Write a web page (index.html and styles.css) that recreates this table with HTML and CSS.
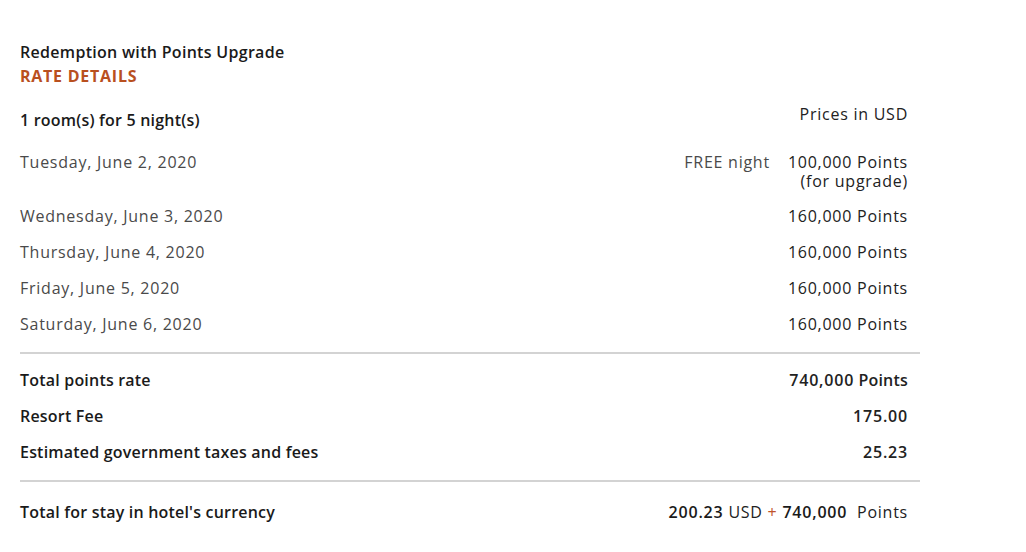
FILE: index.html
```html
<!DOCTYPE html>
<html lang="en">
<head>
<meta charset="utf-8">
<title>Rate details</title>
<link rel="stylesheet" href="styles.css">
</head>
<body>
<main class="rate">
  <header class="rate-head">
    <div class="rate-title">Redemption with Points Upgrade</div>
    <div class="rate-sub">RATE DETAILS</div>
  </header>
  <div class="row row-head">
    <div class="label strong head-label">1 room(s) for 5 night(s)</div>
    <div class="value">Prices in USD</div>
  </div>
  <div class="row">
    <div class="label">Tuesday, June 2, 2020</div>
    <div class="value value-free">
      <span class="free">FREE night</span>
      <span class="pts-block"><span class="line1">100,000 Points</span><span class="line2">(for upgrade)</span></span>
    </div>
  </div>
  <div class="row">
    <div class="label">Wednesday, June 3, 2020</div>
    <div class="value">160,000 Points</div>
  </div>
  <div class="row">
    <div class="label">Thursday, June 4, 2020</div>
    <div class="value">160,000 Points</div>
  </div>
  <div class="row">
    <div class="label">Friday, June 5, 2020</div>
    <div class="value">160,000 Points</div>
  </div>
  <div class="row">
    <div class="label">Saturday, June 6, 2020</div>
    <div class="value">160,000 Points</div>
  </div>
  <hr class="divider">
  <div class="row">
    <div class="label strong">Total points rate</div>
    <div class="value strong"><span class="num">740,000</span> Points</div>
  </div>
  <div class="row">
    <div class="label strong">Resort Fee</div>
    <div class="value strong num">175.00</div>
  </div>
  <div class="row">
    <div class="label strong">Estimated government taxes and fees</div>
    <div class="value strong num">25.23</div>
  </div>
  <hr class="divider divider-2">
  <div class="row">
    <div class="label strong">Total for stay in hotel's currency</div>
    <div class="value"><b class="strong num">200.23</b> USD <span class="plus">+</span> <b class="strong num">740,000</b>&nbsp; Points</div>
  </div>
</main>
</body>
</html>
```
FILE: styles.css
```css
html, body {
  margin: 0;
  padding: 0;
  background: #ffffff;
}
body {
  font-family: "Open Sans", "Liberation Sans", sans-serif;
  font-size: 16px;
  letter-spacing: 0.75px;
  color: #1e1e1e;
}
.rate {
  width: 900px;
  margin-left: 20px;
  padding-top: 40px;
}
.rate-head {
  line-height: 24px;
}
.rate-title {
  font-weight: 600;
  letter-spacing: 0.3px;
  color: #1a1a1a;
}
.rate-sub {
  font-weight: 700;
  letter-spacing: 0.75px;
  color: #b9501f;
}
.row {
  display: flex;
  justify-content: space-between;
  align-items: flex-start;
  padding: 8px 12px 8px 0;
  line-height: 20px;
}
.row-head {
  margin-top: 16px;
  padding: 0 12px 0 0;
  margin-bottom: 14px;
}
.head-label {
  padding-top: 6px;
}
.label {
  color: #4a4a4a;
}
.label.strong, .strong {
  color: #1a1a1a;
  font-weight: 600;
  letter-spacing: 0.2px;
}
.strong .num, .strong.num {
  letter-spacing: 0.8px;
}
.value {
  text-align: right;
  color: #222222;
}
.value-free {
  display: flex;
  gap: 18px;
}
.free {
  color: #4a4a4a;
}
.pts-block {
  display: flex;
  flex-direction: column;
  align-items: flex-end;
}
.line1 {
  line-height: 19px;
  margin-top: 1px;
}
.line2 {
  line-height: 18px;
}
.plus {
  color: #c0532a;
}
.divider {
  border: 0;
  height: 2px;
  background: #d3d3d3;
  margin: 10px 0 8px 0;
}
.divider-2 {
  margin: 10px 0 12px 0;
}
```
